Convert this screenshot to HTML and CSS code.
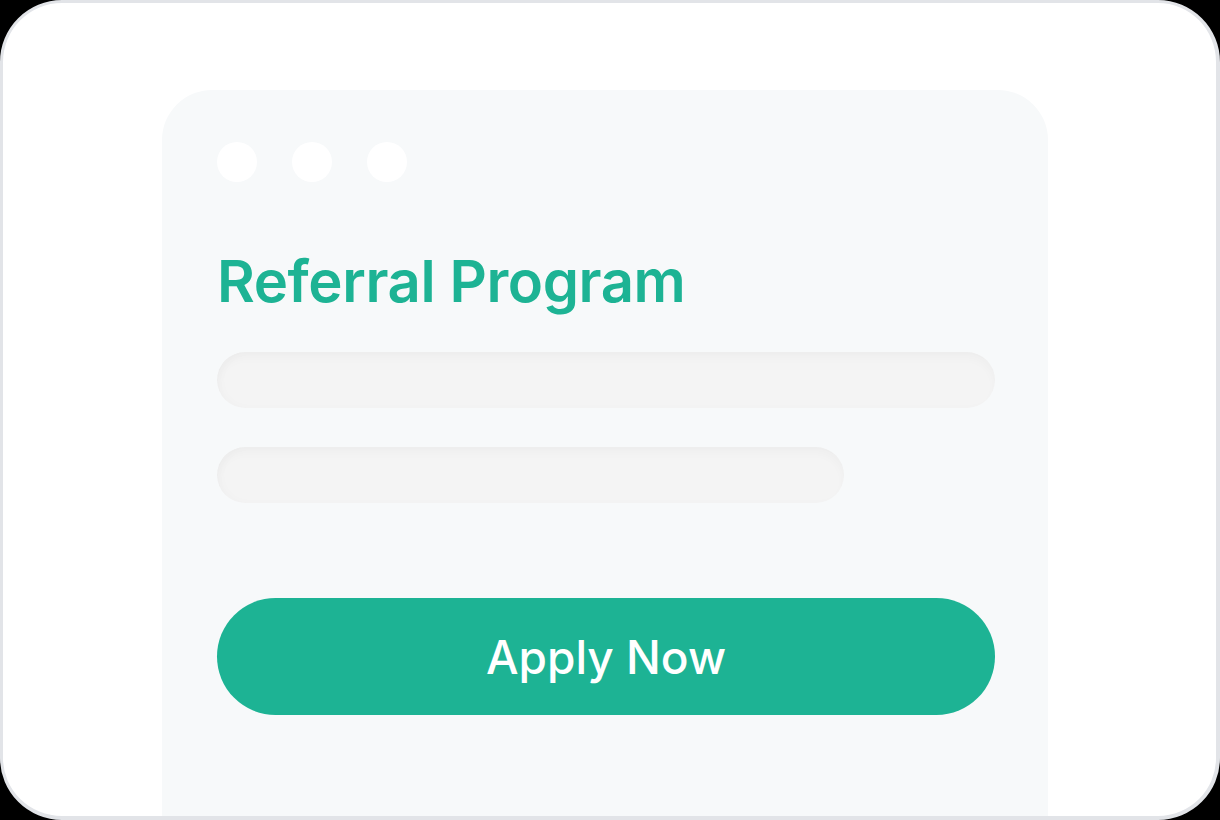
FILE: index.html
```html
<!DOCTYPE html>
<html lang="en">
<head>
    <meta charset="UTF-8">
    <meta name="viewport" content="width=device-width, initial-scale=1.0">
    <title>Referral Program</title>
    <link rel="stylesheet" href="styles.css">
</head>
<body>
    <div class="frame">
        <div class="window">
            <!-- Window controls -->
            <div class="dots">
                <span class="dot"></span>
                <span class="dot"></span>
                <span class="dot"></span>
            </div>

            <h1 class="title">Referral Program</h1>

            <!-- Placeholder text lines -->
            <div class="line"></div>
            <div class="line short"></div>

            <button class="apply-btn">Apply Now</button>
        </div>
    </div>
</body>
</html>
```

FILE: styles.css
```css
html, body {
    margin: 0;
    padding: 0;
    height: 100%;
}

body {
    background-color: #000;
    font-family: Inter, "Noto Sans", Arial, sans-serif;
}

.frame {
    box-sizing: border-box;
    height: 820px;
    background-color: #fff;
    border: 3px solid #e2e4e8;
    border-bottom-width: 4px;
    border-right-width: 4px;
    border-radius: 62px;
    overflow: hidden;
    padding: 87px 0 0 159px;
}

.window {
    box-sizing: border-box;
    width: 886px;
    height: 760px;
    background-color: #f7f9fa;
    border-radius: 50px 50px 0 0;
    padding: 52px 54px 0 55px;
}

.dots {
    display: flex;
    gap: 35px;
}

.dot {
    width: 40px;
    height: 40px;
    border-radius: 50%;
    background-color: #fff;
}

.title {
    margin: 64px 0 36px 0;
    font-size: 58px;
    font-weight: 600;
    line-height: 70px;
    color: #1db394;
    letter-spacing: -0.4px;
}

.line {
    width: 778px;
    height: 56px;
    border-radius: 28px;
    background-color: #f4f4f4;
    box-shadow: inset 0 6px 10px rgba(0, 0, 0, 0.025), inset 4px 0 8px rgba(0, 0, 0, 0.015);
    margin-bottom: 39px;
}

.line.short {
    width: 627px;
}

.apply-btn {
    display: block;
    width: 778px;
    height: 117px;
    margin-top: 95px;
    border: none;
    border-radius: 59px;
    background-color: #1db394;
    color: #fff;
    font-family: inherit;
    font-size: 46px;
    font-weight: 500;
    cursor: pointer;
}
```
